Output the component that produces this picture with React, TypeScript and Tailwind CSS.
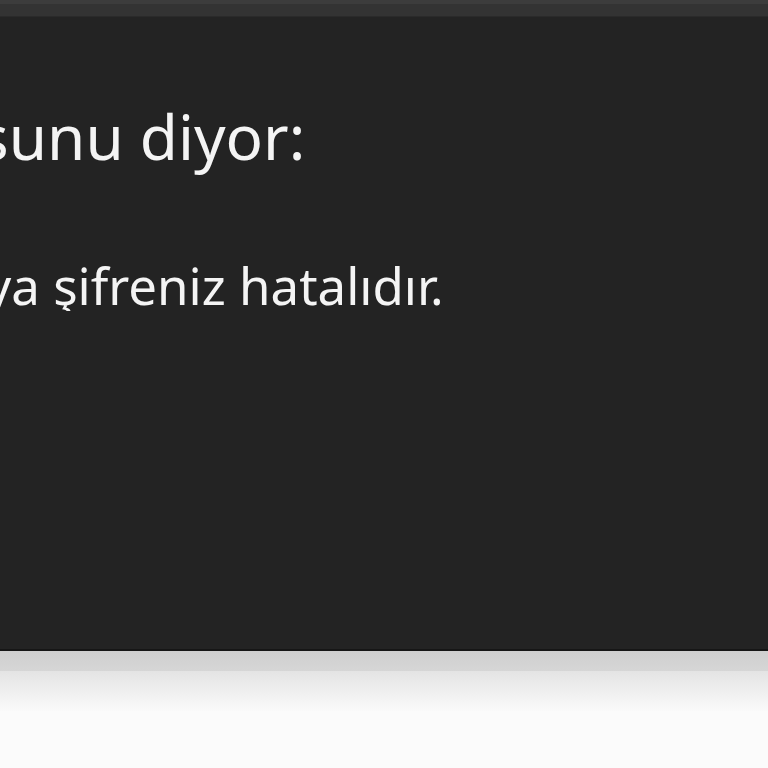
import React from "react";

export default function App() {
  return (
    <div
      className="w-[768px] h-[768px] overflow-hidden flex flex-col bg-[#fafafa]"
      style={{ fontFamily: '"Noto Sans", "Open Sans", sans-serif' }}
    >
      {/* alert dialog */}
      <div className="flex flex-col h-[651px] bg-[#232323] border-b-2 border-[#161616]">
        <div className="h-[4px] bg-[#3c3c3c]" />
        <div className="h-[13px] bg-[#333333] border-b border-[#2a2a2a]" />
        <div className="flex flex-col overflow-hidden">
          <p className="whitespace-nowrap text-[62px] leading-none text-[#f4f4f4] mt-[88px] -ml-[284px]">
            Bu sayfa şunu diyor:
          </p>
          <p className="whitespace-nowrap text-[51px] leading-none text-[#f4f4f4] mt-[93px] -ml-[437px]">
            Kullanıcı adınız veya şifreniz hatalıdır.
          </p>
        </div>
      </div>
      {/* page behind */}
      <div className="h-[20px] bg-gradient-to-b from-[#cfcfcf] to-[#d6d6d6]" />
      <div className="h-[40px] bg-gradient-to-b from-[#e4e4e4] to-[#fafafa]" />
      <div className="flex-1 bg-[#fbfbfb]" />
    </div>
  );
}
